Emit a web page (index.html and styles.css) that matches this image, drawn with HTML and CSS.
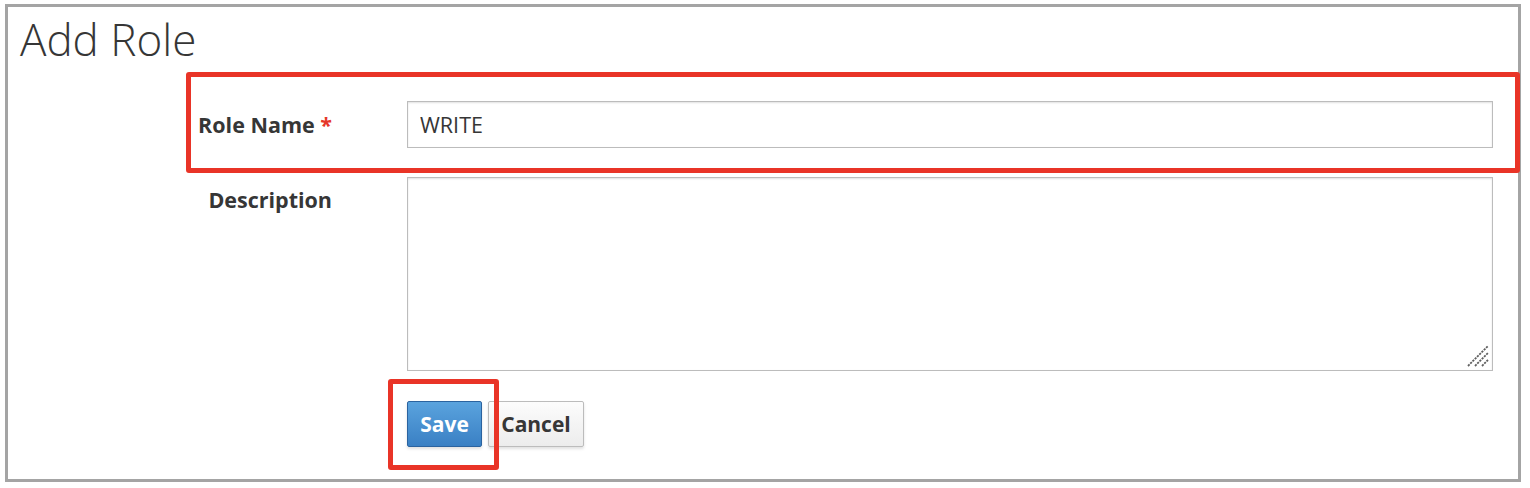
FILE: index.html
```html
<!DOCTYPE html>
<html lang="en">
<head>
<meta charset="utf-8">
<title>Add Role</title>
<link rel="stylesheet" href="styles.css">
</head>
<body>
<div class="frame">
  <h1 class="title">Add Role</h1>
  <form class="form">
    <div class="row row-name">
      <label class="label" for="role-name">Role Name <span class="req">*</span></label>
      <input class="input" id="role-name" type="text" value="WRITE">
    </div>
    <div class="row row-desc">
      <label class="label label-top" for="role-desc">Description</label>
      <div class="ta-wrap">
        <textarea class="textarea" id="role-desc"></textarea>
        <svg class="grip" width="24" height="24" viewBox="0 0 24 24">
          <g stroke="#5f5f5f" stroke-width="1.8" stroke-dasharray="2.2 1" stroke-linecap="butt">
            <line x1="2" y1="22" x2="22" y2="2"/>
            <line x1="9" y1="22" x2="22" y2="9"/>
            <line x1="16" y1="22" x2="22" y2="16"/>
          </g>
        </svg>
      </div>
    </div>
    <div class="row row-actions">
      <div class="label"></div>
      <div class="buttons">
        <button type="button" class="btn btn-primary">Save</button>
        <button type="button" class="btn btn-default">Cancel</button>
      </div>
    </div>
  </form>
</div>
<div class="highlight hl-name"></div>
<div class="highlight hl-save"></div>
</body>
</html>
```
FILE: styles.css
```css
* { box-sizing: border-box; }
html, body { margin: 0; padding: 0; background: #fff; }
body {
  font-family: "Open Sans", "Liberation Sans", sans-serif;
  color: #363636;
  position: relative;
  height: 488px;
  overflow: hidden;
}
.frame {
  margin: 4px 9px 0 5px;
  height: 478px;
  border: 3px solid #a4a4a4;
  background: #fff;
}
.title {
  margin: 2px 0 0 12px;
  font-size: 44px;
  font-weight: 300;
  line-height: 60px;
  color: #363636;
}
.form { margin-top: 32px; padding-right: 25px; }
.row { display: flex; }
.row-name { align-items: center; height: 47px; }
.row-desc { margin-top: 29px; }
.row-actions { margin-top: 30px; }
.label {
  width: 324px;
  flex: none;
  text-align: right;
  font-size: 21.5px;
  font-weight: 700;
  line-height: 29px;
  margin-right: 75px;
  color: #363636;
}
.label-top { padding-top: 8px; }
.req { color: #e5372a; }
.input {
  flex: 1;
  height: 47px;
  border: 1px solid #bcbcbc;
  box-shadow: inset 0 1px 2px rgba(0,0,0,.12);
  font-family: "Open Sans", "Liberation Sans", sans-serif;
  font-size: 21.5px;
  color: #363636;
  padding: 0 12px;
  outline: none;
  border-radius: 0;
}
.ta-wrap { flex: 1; position: relative; height: 194px; }
.textarea {
  display: block;
  width: 100%;
  height: 194px;
  border: 1px solid #bcbcbc;
  box-shadow: inset 0 1px 2px rgba(0,0,0,.12);
  resize: none;
  outline: none;
  border-radius: 0;
  font-family: "Open Sans", "Liberation Sans", sans-serif;
}
.grip { position: absolute; right: 3px; bottom: 3px; }
.buttons { display: flex; gap: 6px; }
.btn {
  height: 46px;
  font-family: "Open Sans", "Liberation Sans", sans-serif;
  font-size: 21px;
  font-weight: 700;
  border-radius: 2px;
  padding: 0 12px;
  line-height: 44px;
  box-shadow: 0 2px 3px rgba(0,0,0,.12);
  cursor: pointer;
}
.btn-primary {
  width: 75px;
  color: #fff;
  background: linear-gradient(#5aa3de, #3a80c4);
  border: 1px solid #2b639f;
}
.btn-default {
  width: 96px;
  color: #363636;
  background: linear-gradient(#fcfcfc, #ececec);
  border: 1px solid #bcbcbc;
}
.highlight {
  position: absolute;
  border: 5px solid #e93427;
  border-radius: 3px;
  pointer-events: none;
}
.hl-name { left: 186px; top: 72px; width: 1334px; height: 101px; }
.hl-save { left: 388px; top: 379px; width: 111px; height: 91px; }
```
